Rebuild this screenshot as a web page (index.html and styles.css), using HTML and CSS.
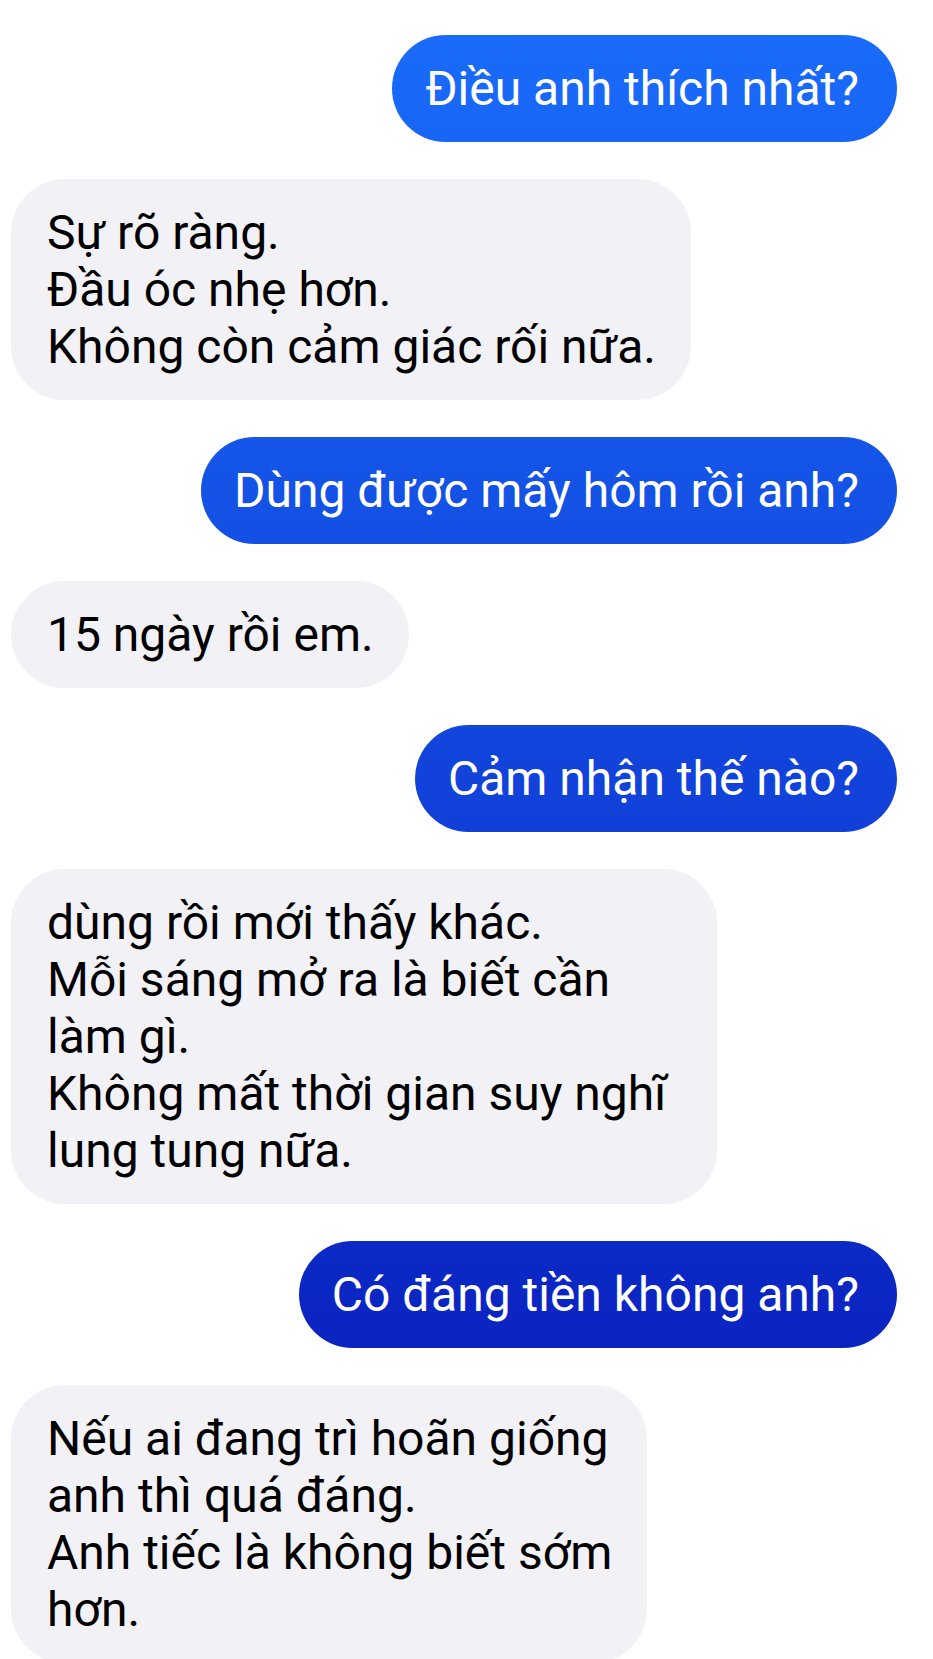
FILE: index.html
```html
<!DOCTYPE html>
<html lang="vi">
<head>
<meta charset="utf-8">
<title>Chat</title>
<link rel="stylesheet" href="styles.css">
</head>
<body>
<main class="thread">
  <div class="bubble out">Điều anh thích nhất?</div>
  <div class="bubble in">Sự rõ ràng.<br>Đầu óc nhẹ hơn.<br>Không còn cảm giác rối nữa.</div>
  <div class="bubble out">Dùng được mấy hôm rồi anh?</div>
  <div class="bubble in">15 ngày rồi em.</div>
  <div class="bubble out">Cảm nhận thế nào?</div>
  <div class="bubble in wrapped">dùng rồi mới thấy khác.<br>Mỗi sáng mở ra là biết cần<br>làm gì.<br>Không mất thời gian suy nghĩ<br>lung tung nữa.</div>
  <div class="bubble out">Có đáng tiền không anh?</div>
  <div class="bubble in">Nếu ai đang trì hoãn giống<br>anh thì quá đáng.<br>Anh tiếc là không biết sớm<br>hơn.</div>
</main>
</body>
</html>
```
FILE: styles.css
```css
html, body {
  margin: 0;
  padding: 0;
  background: #ffffff;
}

body {
  font-family: Roboto, "Noto Sans", "Liberation Sans", sans-serif;
  -webkit-font-smoothing: antialiased;
}

.thread {
  display: flex;
  flex-direction: column;
  gap: 37px;
  padding: 35px 36px 0 11px;
}

.bubble {
  box-sizing: border-box;
  font-size: 48px;
  line-height: 57px;
  border-radius: 54px;
  white-space: nowrap;
}

.out {
  align-self: flex-end;
  padding: 25px 38px 25px 33px;
  color: #ffffff;
  background: linear-gradient(180deg, #1a6dfc 0px, #0713b3 1659px) fixed;
}

.in {
  align-self: flex-start;
  padding: 25px 35px 25px 36px;
  color: #000000;
  background: #f1f1f6;
}

.wrapped {
  width: 706px;
}
```
